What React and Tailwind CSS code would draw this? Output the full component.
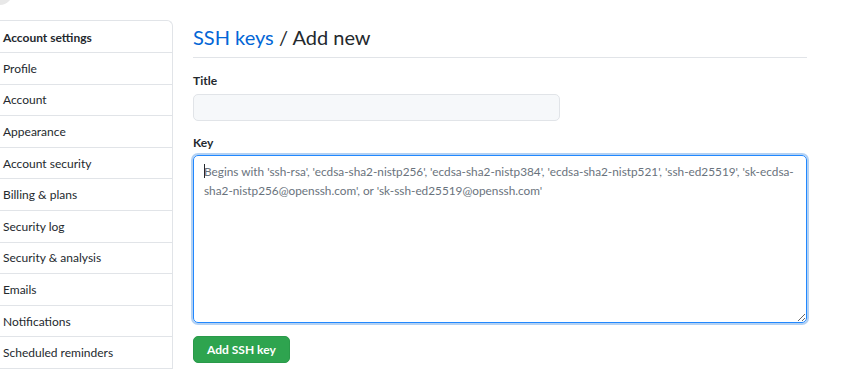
import React from 'react';

const MENU = [
    'Profile',
    'Account',
    'Appearance',
    'Account security',
    'Billing & plans',
    'Security log',
    'Security & analysis',
    'Emails',
    'Notifications',
    'Scheduled reminders',
];

const PLACEHOLDER =
    "Begins with 'ssh-rsa', 'ecdsa-sha2-nistp256', 'ecdsa-sha2-nistp384', 'ecdsa-sha2-nistp521', 'ssh-ed25519', 'sk-ecdsa-sha2-nistp256@openssh.com', or 'sk-ssh-ed25519@openssh.com'";

const App = () => {
    return (
        <div className="relative w-[846px] h-[377px] overflow-hidden bg-white text-[#24292e] font-['Lato',sans-serif] text-[12px]">
            {/* avatar peeking in at the top */}
            <div className="absolute left-[-14px] top-[-22px] w-[27px] h-[27px] rounded-full bg-[#e8e8e8]"></div>

            <div className="flex">
                {/* Settings menu */}
                <nav className="mt-[20px] w-[173px] shrink-0 border-t border-r border-[#e1e4e8] rounded-tr-[6px]">
                    <div className="h-[32px] flex items-center pt-[2px] pl-[3px] font-bold border-b border-[#e1e4e8]">
                        Account settings
                    </div>
                    {MENU.map((item) => (
                        <div key={item} className="h-[31.6px] flex items-center pt-[1px] pl-[3px] border-b border-[#e1e4e8]">
                            {item}
                        </div>
                    ))}
                </nav>

                {/* Form */}
                <main className="ml-[20px] w-[614px] pt-[22px]">
                    <div className="pb-[5px] border-b border-[#e1e4e8] text-[20px] leading-[30px]">
                        <span className="text-[#0366d6]">SSH keys</span> / Add new
                    </div>

                    <label className="block mt-[14px] font-bold leading-[18px]">Title</label>
                    <input
                        type="text"
                        className="block mt-[4px] w-[367px] h-[27px] rounded-[5px] border border-[#e1e4e8] bg-[#f6f8fa] outline-none"
                    />

                    <label className="block mt-[13px] font-bold leading-[18px]">Key</label>
                    <div className="relative mt-[3px]">
                        <textarea
                            readOnly
                            placeholder={PLACEHOLDER}
                            className="block w-[614px] h-[168px] rounded-[5px] border border-[#2188ff] shadow-[0_0_0_2px_rgba(3,102,214,0.3)] px-[10px] py-[6px] leading-[19px] text-[11.8px] placeholder:text-[#6a737d] outline-none resize-y"
                        />
                        <span className="absolute left-[11px] top-[9px] w-px h-[14px] bg-[#24292e]"></span>
                    </div>

                    <button className="mt-[13px] h-[27px] px-[13px] rounded-[5px] bg-[#2ea44f] border border-[#2a9a4a] text-white font-bold leading-[18px]">
                        Add SSH key
                    </button>
                </main>
            </div>
        </div>
    );
};

export default App;
